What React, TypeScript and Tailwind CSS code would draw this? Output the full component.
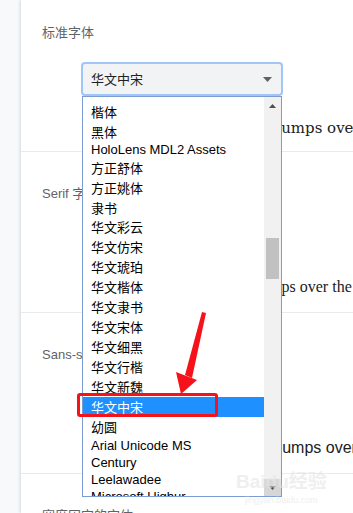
const cjk = '"Noto Sans CJK SC", sans-serif';

type Item = { name: string; h: string; latin?: boolean; active?: boolean };

const items: Item[] = [
  { name: '楷体', h: 'h-[20px]' },
  { name: '黑体', h: 'h-[20px]' },
  { name: 'HoloLens MDL2 Assets', h: 'h-[16px]', latin: true },
  { name: '方正舒体', h: 'h-[20px]' },
  { name: '方正姚体', h: 'h-[20px]' },
  { name: '隶书', h: 'h-[19px]' },
  { name: '华文彩云', h: 'h-[20px]' },
  { name: '华文仿宋', h: 'h-[20px]' },
  { name: '华文琥珀', h: 'h-[20px]' },
  { name: '华文楷体', h: 'h-[20px]' },
  { name: '华文隶书', h: 'h-[20px]' },
  { name: '华文宋体', h: 'h-[20px]' },
  { name: '华文细黑', h: 'h-[20px]' },
  { name: '华文行楷', h: 'h-[20px]' },
  { name: '华文新魏', h: 'h-[20px]' },
  { name: '华文中宋', h: 'h-[20px]', active: true },
  { name: '幼圆', h: 'h-[20px]' },
  { name: 'Arial Unicode MS', h: 'h-[17px]', latin: true },
  { name: 'Century', h: 'h-[17px]', latin: true },
  { name: 'Leelawadee', h: 'h-[17px]', latin: true },
  { name: 'Microsoft Uighur', h: 'h-[17px]', latin: true },
];

const sample = 'The quick brown fox jumps over the lazy dog';

function Label({ children }: { children: React.ReactNode }) {
  return (
    <div className="h-5 pl-[21px] text-[13px] leading-5 text-[#5f6368] [font-family:'Liberation_Sans','Noto_Sans_CJK_SC',sans-serif]">
      {children}
    </div>
  );
}

export default function App() {
  return (
    <div className="relative flex h-[513px] w-full overflow-hidden bg-[#f8f9fa]">
      <div className="w-[21px] shrink-0" />
      <main className="flex-1 bg-white shadow-[-1px_0_3px_rgba(60,64,67,0.18)]">
        {/* 标准字体 */}
        <section className="h-[152px] border-b border-[#e8eaed] pt-[23px]">
          <Label>标准字体</Label>
          <div className="ml-[60px] mt-[19px] flex h-[34px] w-[202px] items-center justify-between rounded-[4px] border-2 border-[#a3c4f6] bg-[#f1f3f4] pl-[8px] pr-[9px]">
            <span className="text-[13px] text-[#202124]" style={{ fontFamily: cjk }}>华文中宋</span>
            <svg width="9" height="5" viewBox="0 0 9 5"><path d="M0 0h9L4.5 5z" fill="#5f6368" /></svg>
          </div>
          <p className="mt-[22px] h-5 whitespace-nowrap pl-[95px] text-[15px] leading-5 text-[#202124] [font-family:'DejaVu_Serif',serif]">
            {sample}
          </p>
        </section>

        {/* Serif */}
        <section className="h-[161px] border-b border-[#e8eaed] pt-[32px]">
          <Label>Serif 字体</Label>
          <div className="mt-[19px] h-[34px]" />
          <p className="mt-[20px] h-5 whitespace-nowrap pl-[97px] text-[16px] leading-5 text-[#202124] [font-family:'Liberation_Serif',serif]">
            {sample}
          </p>
        </section>

        {/* Sans-serif */}
        <section className="h-[161px] border-b border-[#e8eaed] pt-[32px]">
          <Label>Sans-serif 字体</Label>
          <div className="mt-[19px] h-[34px]" />
          <p className="mt-[20px] h-5 whitespace-nowrap pl-[110px] text-[16px] leading-5 text-[#202124] [font-family:'Liberation_Sans',sans-serif]">
            {sample}
          </p>
        </section>

        <section className="pt-[32px]">
          <Label>宽度固定的字体</Label>
        </section>
      </main>

      {/* open dropdown list */}
      <div className="absolute left-[82px] top-[96px] flex h-[401px] w-[200px] border border-[#7a9cd3] bg-white">
        <ul className="flex-1 overflow-hidden pt-[5px]">
          {items.map((it) => (
            <li
              key={it.name}
              className={`${it.h} flex items-center whitespace-nowrap pl-2 text-[13px] ${it.active ? 'bg-[#1e90ff] text-white' : 'text-black'}`}
              style={{ fontFamily: it.latin ? '"Liberation Sans", sans-serif' : cjk }}
            >
              {it.name}
            </li>
          ))}
        </ul>
        <div className="relative flex w-[17px] flex-col justify-between bg-[#f1f1f1]">
          <div className="flex h-[17px] items-center justify-center">
            <svg width="7" height="4" viewBox="0 0 7 4"><path d="M3.5 0L7 4H0z" fill="#505050" /></svg>
          </div>
          <div className="absolute left-[2px] right-[2px] top-[141px] h-[41px] bg-[#c1c1c1]" />
          <div className="flex h-[17px] items-center justify-center bg-[#d6d6d6]">
            <svg width="7" height="4" viewBox="0 0 7 4"><path d="M0 0h7L3.5 4z" fill="#505050" /></svg>
          </div>
        </div>
      </div>

      {/* red highlight box */}
      <div className="pointer-events-none absolute left-[77px] top-[393px] h-[24px] w-[141px] rounded-[3px] border-[3px] border-[#f5121b]" />

      {/* red arrow */}
      <svg className="pointer-events-none absolute left-0 top-0" width="353" height="513">
        <polygon points="202,312 206,313 192,378 185,375" fill="#f5121b" />
        <polygon points="176,372 197,380 181,394" fill="#f5121b" />
      </svg>

      {/* watermark */}
      <div className="pointer-events-none absolute left-[236px] top-[470px] flex flex-col items-center text-[#e6e6e6] opacity-60">
        <span className="text-[19px] font-bold leading-6 [font-family:'Liberation_Sans','Noto_Sans_CJK_SC',sans-serif]">Baidu经验</span>
        <span className="text-[9px] leading-3 [font-family:'Liberation_Sans',sans-serif]">jingyan.baidu.com</span>
      </div>
    </div>
  );
}
